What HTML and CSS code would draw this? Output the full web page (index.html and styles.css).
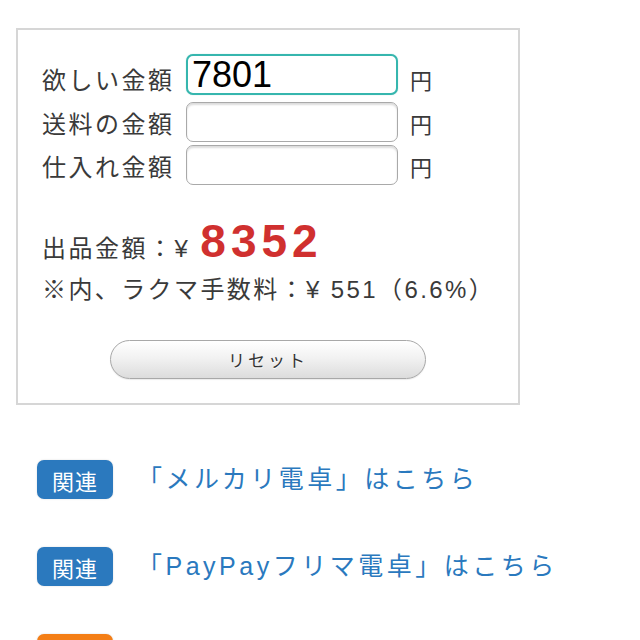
FILE: index.html
```html
<!DOCTYPE html>
<html lang="ja">
<head>
<meta charset="utf-8">
<title>ラクマ電卓</title>
<link rel="stylesheet" href="styles.css">
</head>
<body>
<div class="calc">
  <div class="row row--first">
    <label class="label" for="want">欲しい金額</label>
    <input class="field field--active" id="want" type="text" value="7801">
    <span class="unit">円</span>
  </div>
  <div class="row row--second">
    <label class="label" for="ship">送料の金額</label>
    <input class="field" id="ship" type="text" value="">
    <span class="unit">円</span>
  </div>
  <div class="row row--third">
    <label class="label" for="cost">仕入れ金額</label>
    <input class="field" id="cost" type="text" value="">
    <span class="unit">円</span>
  </div>
  <div class="result">
    <span class="result-label">出品金額：¥</span><span class="result-price">8352</span>
  </div>
  <div class="fee">※内、ラクマ手数料：¥ 551（6.6%）</div>
  <div class="actions">
    <button class="reset" type="button">リセット</button>
  </div>
</div>
<ul class="links">
  <li class="link-row"><span class="badge">関連</span><a class="link" href="#">「メルカリ電卓」はこちら</a></li>
  <li class="link-row"><span class="badge">関連</span><a class="link" href="#">「PayPayフリマ電卓」はこちら</a></li>
  <li class="link-row"><span class="badge badge--orange">お知</span><a class="link" href="#">「使い方」はこちら</a></li>
</ul>
</body>
</html>
```
FILE: styles.css
```css
html, body {
  margin: 0;
  padding: 0;
  background: #fff;
}
body {
  font-family: "Liberation Sans", "Noto Sans CJK JP", sans-serif;
  color: #3a3a3a;
  font-size: 24px;
}
.calc {
  box-sizing: border-box;
  width: 504px;
  margin: 28px 0 0 16px;
  border: 2px solid #d6d6d6;
  padding: 24px 0 24px 24px;
}
.row {
  display: flex;
  align-items: flex-start;
}
.label {
  width: 144px;
  flex: none;
  font-size: 24px;
  line-height: 24px;
  letter-spacing: 2.5px;
  white-space: nowrap;
  padding-top: 11px;
}
.unit {
  margin-left: 12px;
  font-size: 22px;
  line-height: 24px;
  padding-top: 12px;
}
.row--first .label { padding-top: 15px; }
.row--first .unit { padding-top: 16px; }
.row--second { margin-top: 7px; }
.row--third { margin-top: 3px; }
.field {
  box-sizing: border-box;
  width: 212px;
  height: 40px;
  margin: 0;
  padding: 0 6px;
  border: 1px solid #a9a9a9;
  border-radius: 7px;
  background: #fff;
  box-shadow: inset 0 2px 2px rgba(0, 0, 0, 0.14);
  font-family: "Liberation Sans", sans-serif;
  font-size: 36px;
  color: #000;
  outline: none;
}
.field--active {
  height: 41px;
  border: 2px solid #36b6ae;
  padding: 0 4px;
  line-height: 37px;
  box-shadow: 0 0 1px rgba(54, 182, 174, 0.5);
}
.result {
  display: flex;
  align-items: baseline;
  margin-top: 35px;
  line-height: 43px;
}
.result-label {
  font-size: 24px;
  letter-spacing: 2.5px;
}
.result-price {
  margin-left: 10px;
  font-size: 46px;
  font-weight: bold;
  letter-spacing: 5px;
  color: #d0302f;
}
.fee {
  margin-top: 8px;
  font-size: 24px;
  line-height: 24px;
  letter-spacing: 2.4px;
  white-space: nowrap;
}
.actions {
  display: flex;
  justify-content: center;
  padding-right: 24px;
  margin-top: 38px;
}
.reset {
  box-sizing: border-box;
  width: 316px;
  height: 39px;
  border: 1px solid #a8a8a8;
  border-radius: 20px;
  background: linear-gradient(#ffffff, #f2f2f2 45%, #dcdcdc);
  box-shadow: 0 1px 1px rgba(0, 0, 0, 0.08);
  font-family: "Noto Sans CJK JP", sans-serif;
  font-size: 17px;
  letter-spacing: 3px;
  color: #333;
  text-shadow: 0 1px 0 #fff;
  padding: 0;
}
.links {
  list-style: none;
  margin: 55px 0 0 0;
  padding: 0 0 0 37px;
}
.link-row {
  display: flex;
  align-items: center;
  height: 39px;
  margin-bottom: 48px;
}
.badge {
  box-sizing: border-box;
  width: 76px;
  height: 39px;
  flex: none;
  display: flex;
  align-items: center;
  justify-content: center;
  border-radius: 7px;
  background: #2b79be;
  color: #fff;
  font-family: "Noto Sans CJK JP", sans-serif;
  font-size: 22px;
  letter-spacing: 1px;
  box-shadow: 0 0 2px rgba(0, 0, 0, 0.15);
}
.badge--orange {
  background: #f47e16;
}
.link {
  margin-left: 24px;
  color: #2a79be;
  text-decoration: none;
  font-size: 25px;
  line-height: 25px;
  letter-spacing: 3.5px;
  white-space: nowrap;
}
```
